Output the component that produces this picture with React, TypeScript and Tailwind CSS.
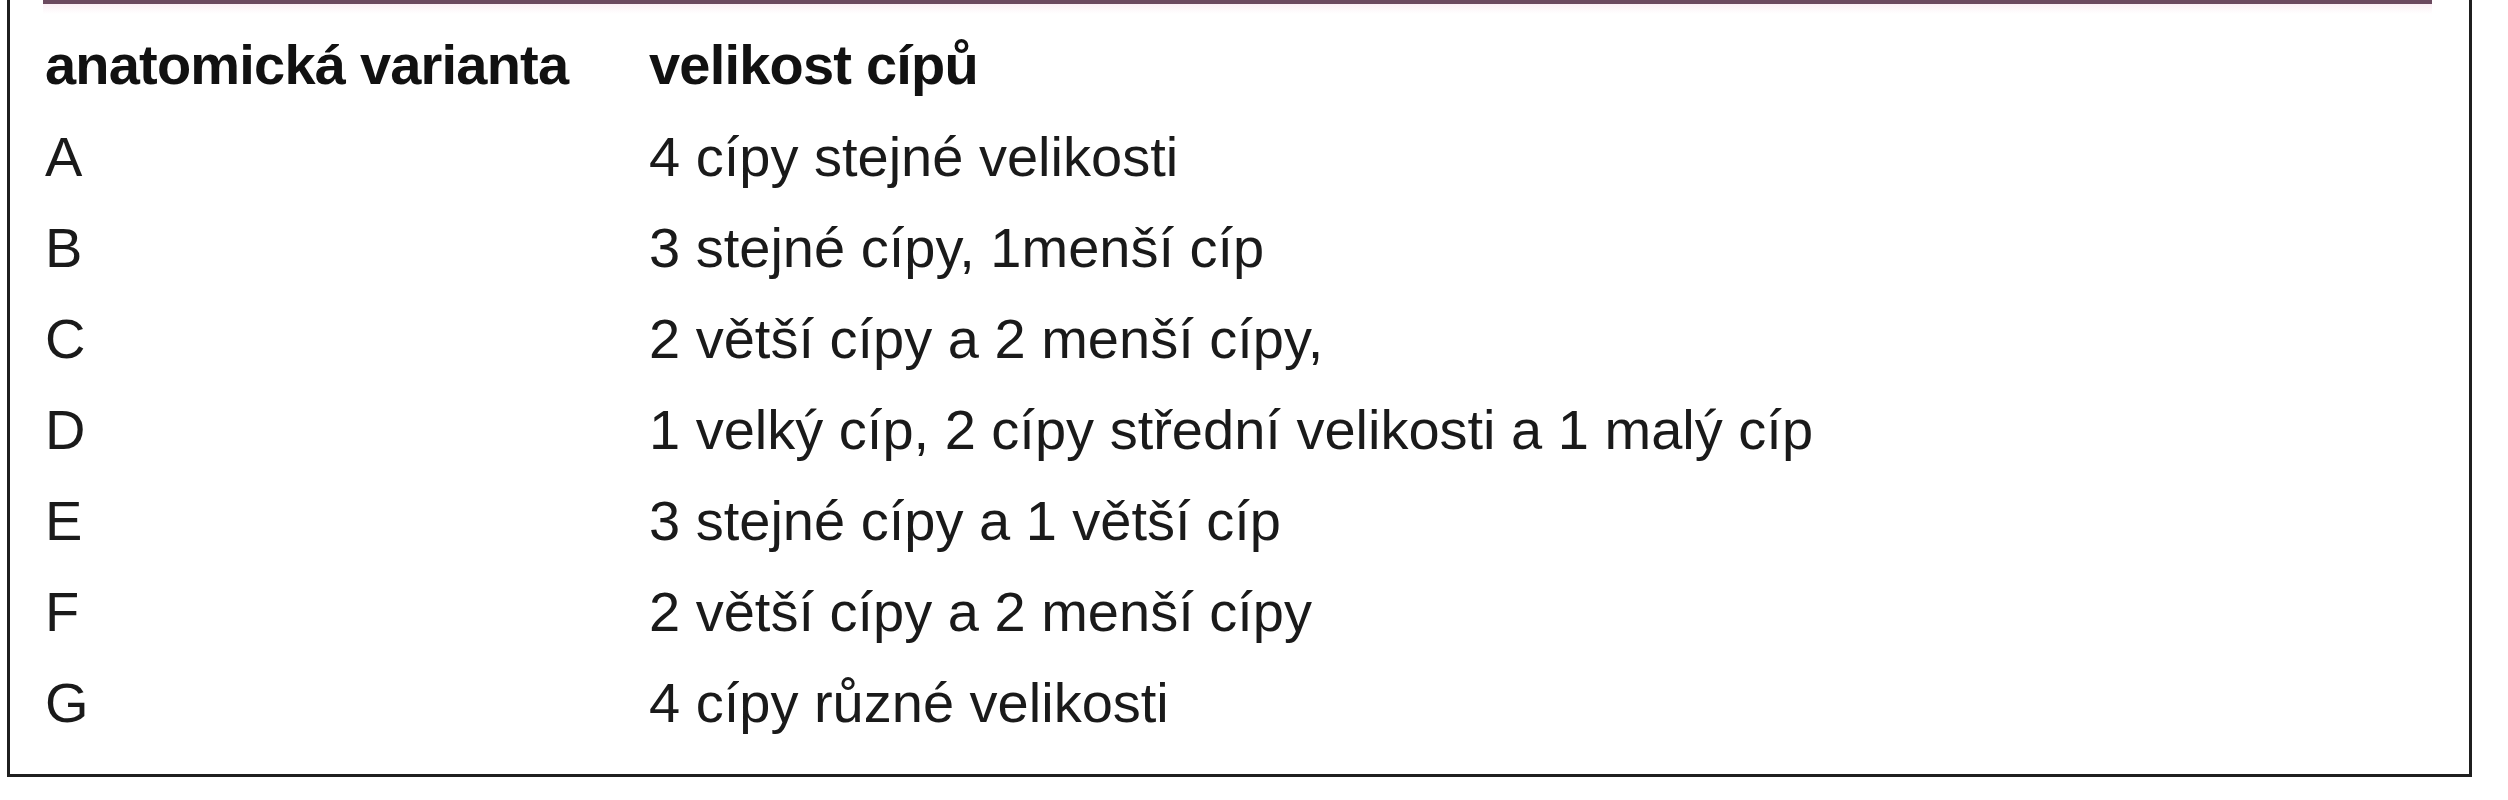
import React from "react";

const rows: [string, string][] = [
  ["A", "4 cípy stejné velikosti"],
  ["B", "3 stejné cípy, 1menší cíp"],
  ["C", "2 větší cípy a 2 menší cípy,"],
  ["D", "1 velký cíp, 2 cípy střední velikosti a 1 malý cíp"],
  ["E", "3 stejné cípy a 1 větší cíp"],
  ["F", "2 větší cípy a 2 menší cípy"],
  ["G", "4 cípy různé velikosti"],
];

export default function App() {
  return (
    <div
      className="w-[2508px] h-[800px] bg-white pl-[7px] overflow-hidden"
      style={{ fontFamily: '"Liberation Sans", Arial, sans-serif' }}
    >
      <div className="w-[2465px] h-[777px] border-l-[3px] border-r-[3px] border-b-[3px] border-[#1f1f1f] flex flex-col">
        <div className="ml-[33px] w-[2389px] h-[4px] bg-[#6b4a5f]" />
        <div className="ml-[33px] w-[2389px] h-[10px] bg-gradient-to-b from-[#fbeff5] to-white" />
        <div className="pt-[4px] pl-[35px] text-[56px] text-[#1a1a1a]">
          <div className="flex h-[93px] leading-[93px] font-bold text-[#111] tracking-[-0.8px]">
            <div className="w-[604px]">anatomická varianta</div>
            <div>velikost cípů</div>
          </div>
          {rows.map(([a, b]) => (
            <div key={a} className="flex h-[91px] leading-[91px]">
              <div className="w-[604px]">{a}</div>
              <div>{b}</div>
            </div>
          ))}
        </div>
      </div>
    </div>
  );
}
